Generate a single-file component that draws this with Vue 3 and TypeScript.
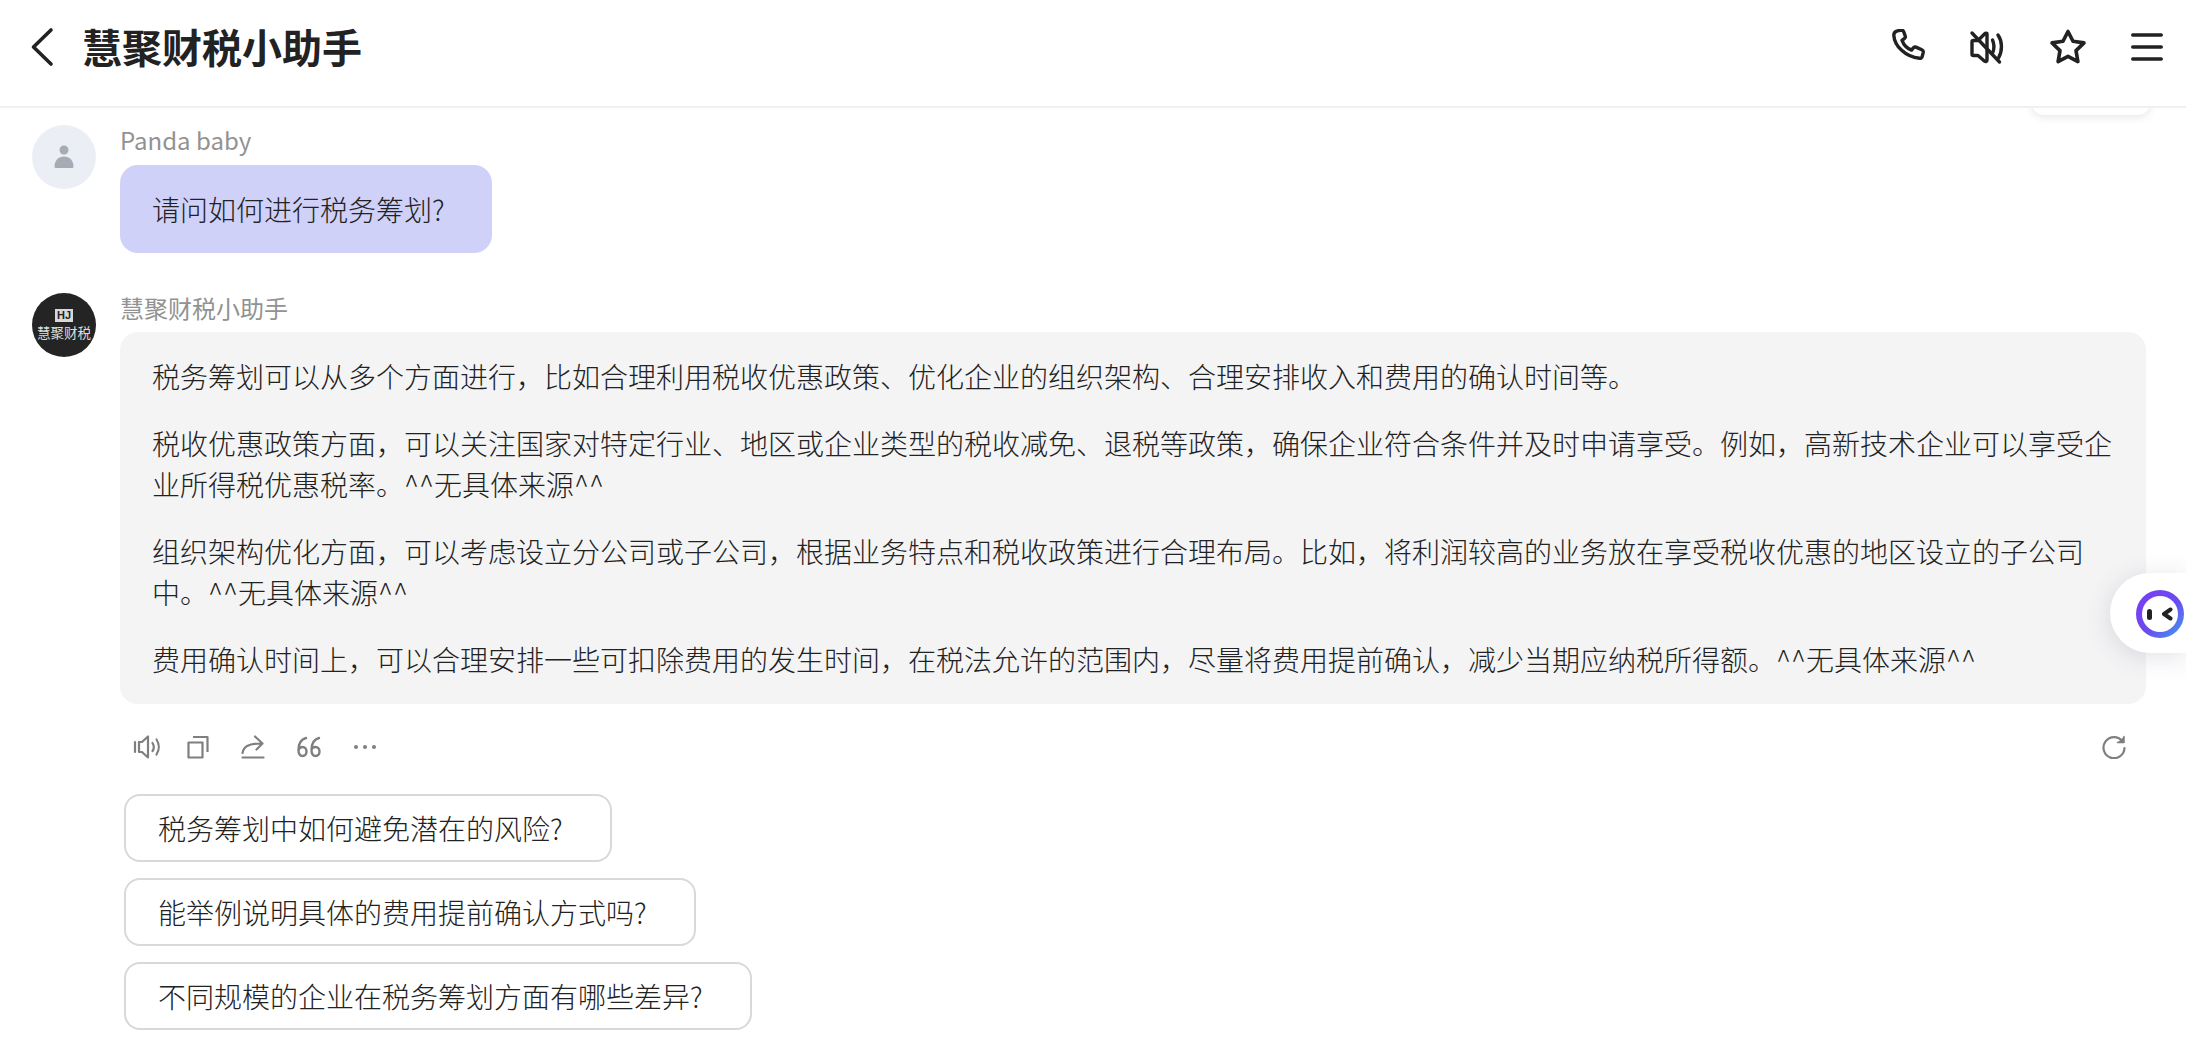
<script setup lang="ts">
const paragraphs: string[] = [
  '税务筹划可以从多个方面进行，比如合理利用税收优惠政策、优化企业的组织架构、合理安排收入和费用的确认时间等。',
  '税收优惠政策方面，可以关注国家对特定行业、地区或企业类型的税收减免、退税等政策，确保企业符合条件并及时申请享受。例如，高新技术企业可以享受企业所得税优惠税率。^^无具体来源^^',
  '组织架构优化方面，可以考虑设立分公司或子公司，根据业务特点和税收政策进行合理布局。比如，将利润较高的业务放在享受税收优惠的地区设立的子公司中。^^无具体来源^^',
  '费用确认时间上，可以合理安排一些可扣除费用的发生时间，在税法允许的范围内，尽量将费用提前确认，减少当期应纳税所得额。^^无具体来源^^',
]
const suggestions: string[] = [
  '税务筹划中如何避免潜在的风险?',
  '能举例说明具体的费用提前确认方式吗?',
  '不同规模的企业在税务筹划方面有哪些差异?',
]
</script>

<template>
  <div class="page">
    <header class="header">
      <div class="head-left">
        <svg class="back" width="24" height="40" viewBox="0 0 24 40" fill="none">
          <path d="M21 3 3.500 20 21 37" stroke="#222" stroke-width="3.600" stroke-linecap="round" stroke-linejoin="round" />
        </svg>
        <h1 class="title">慧聚财税小助手</h1>
      </div>
      <div class="head-right">
        <svg class="phone" width="36" height="36" viewBox="0 0 36 36" fill="none" stroke="#222" stroke-width="3.400" stroke-linejoin="round" stroke-linecap="round">
          <path d="M6.500 1.800 10.600 1c1.200 0 1.800 1 2.200 2l1.500 4.300c.3 1-.2 1.700-1 2.300L11 11.300c1.500 4 5 8 9.500 9.800l2-2.400c.8-.8 1.500-1 2.500-.6l5.800 2.700c1.200.6 1.700 1.500 1.400 2.800l-1 3.800c-.4 1.300-1.400 2-2.800 1.900C14.500 28 3.500 17 2.800 6.300 2.700 4 4.200 2.300 6.500 1.800Z" />
        </svg>
        <svg width="36" height="36" viewBox="0 0 36 36" fill="none" stroke="#222" stroke-width="3.400" stroke-linejoin="round" stroke-linecap="round">
          <path d="M18 5v26c0 1.600-1.300 2-2.400 1.200L9 26.500H4.500c-1 0-1.500-.6-1.500-1.500V13c0-1 .5-1.500 1.500-1.500H9L15.500 5c1.100-1.100 2.500-1.200 2.500 0Z" />
          <path d="M23.500 11c1.800 4 1.800 8 .5 12M29 6c4.500 6.500 4.500 16 .5 23" />
          <path d="M3 4 30.500 33" />
        </svg>
        <svg width="38" height="36" viewBox="0 0 38 36" fill="none" stroke="#222" stroke-width="3.600" stroke-linejoin="round">
          <path d="M19 2.500 24 12.300l11 1.600-8 7.700 1.900 11L19 27.300 9.100 32.600 11 21.600l-8-7.700 11-1.600Z" />
        </svg>
        <svg class="menu" width="32" height="28" viewBox="0 0 32 28" fill="none" stroke="#222" stroke-width="3.600" stroke-linecap="round">
          <path d="M1.800 2h28.400M1.800 14h28.400M1.800 26h28.400" />
        </svg>
      </div>
    </header>

    <div class="peek"></div>

    <main class="chat">
      <section class="msg">
        <div class="avatar user-avatar">
          <svg width="22" height="24" viewBox="0 0 22 24" fill="#a7abb5">
            <circle cx="11" cy="5" r="4.500" />
            <path d="M1.500 21.500C1.500 15.500 5.500 11.500 11 11.500s9.500 4 9.500 10c0 1-.6 1.500-1.500 1.500H3c-1 0-1.500-.5-1.500-1.500Z" />
          </svg>
        </div>
        <div class="body">
          <div class="name">Panda baby</div>
          <div class="bubble user-bubble">请问如何进行税务筹划?</div>
        </div>
      </section>

      <section class="msg second">
        <div class="avatar bot-avatar">
          <span class="logo-mark">HJ</span>
          <span class="logo-text">慧聚财税</span>
        </div>
        <div class="body">
          <div class="name">慧聚财税小助手</div>
          <div class="bubble bot-bubble">
            <p v-for="(p, i) in paragraphs" :key="i">{{ p }}</p>
          </div>
          <div class="actions">
            <div class="action-left">
              <svg class="speaker" width="28" height="26" viewBox="0 0 28 26" fill="none" stroke="#7f7f7f" stroke-width="2.200" stroke-linejoin="round" stroke-linecap="round">
                <path d="M2 8v10M6 8h3l6-5.500V23.500L9 18H6Z" />
                <path d="M19.500 9c1.500 2.500 1.500 6 0 8M23.500 5.500c3 4.500 3 10.500 0 15" />
              </svg>
              <svg width="22" height="24" viewBox="0 0 22 24" fill="none" stroke="#7f7f7f" stroke-width="2.200" stroke-linejoin="round">
                <path d="M1.500 7.500h14v15h-14Z" />
                <path d="M6 2h14.500v15" />
              </svg>
              <svg width="24" height="24" viewBox="0 0 24 24" fill="none" stroke="#7f7f7f" stroke-width="2.200" stroke-linejoin="round" stroke-linecap="round">
                <path d="M1.500 18c1-6 5-9.500 19-9.500M14 1.500l7.500 7-6 6" />
                <path d="M1.500 22.500h21" />
              </svg>
              <svg width="24" height="22" viewBox="0 0 24 22" fill="none" stroke="#7f7f7f" stroke-width="2.400" stroke-linecap="round">
                <path d="M9 2C3.500 3.500 1.500 7 1.500 14c0 3.500 1.500 6 4 6s4-2 4-4.500S8 11 5.500 11 2 12.500 1.500 14" />
                <path d="M22 2c-5.500 1.500-7.500 5-7.500 12 0 3.500 1.500 6 4 6s4-2 4-4.500-1.500-4.500-4-4.500-4 1.500-4 3" />
              </svg>
              <svg class="more" width="24" height="6" viewBox="0 0 24 6" fill="#7f7f7f">
                <circle cx="3" cy="3" r="2" /><circle cx="12" cy="3" r="2" /><circle cx="21" cy="3" r="2" />
              </svg>
            </div>
            <svg width="24" height="24" viewBox="0 0 24 24" fill="none" stroke="#7f7f7f" stroke-width="2.200" stroke-linecap="round">
              <path d="M20.500 6.500A10.500 10.500 0 1 0 22.500 13" />
              <path d="M22 1.500v6h-6.500" fill="#7f7f7f" stroke-width="1.500" stroke-linejoin="round" />
            </svg>
          </div>
          <div class="suggestions">
            <button v-for="s in suggestions" :key="s" class="suggestion">{{ s }}</button>
          </div>
        </div>
      </section>
    </main>

    <div class="float-tab">
      <div class="ring"><div class="face"><i class="eye"></i>
        <svg width="14" height="14" viewBox="0 0 14 14" fill="none" stroke="#222" stroke-width="4" stroke-linecap="round" stroke-linejoin="round"><path d="M10.500 2.500 4 7l6.500 4.500" /></svg>
      </div></div>
    </div>
  </div>
</template>

<style scoped>
.page {
  position: relative;
  width: 2186px;
  height: 1064px;
  overflow: hidden;
  background: #fff;
  font-family: "Noto Sans CJK SC", "Noto Sans", sans-serif;
  font-weight: 300;
  color: #222;
}
.header {
  position: relative;
  z-index: 2;
  box-sizing: border-box;
  display: flex;
  align-items: center;
  justify-content: space-between;
  height: 108px;
  padding: 0 23px 12px 30px;
  background: #fff;
  border-bottom: 2px solid #eef0f5;
}
.head-left {
  display: flex;
  align-items: center;
  gap: 28px;
}
.back { display: block; }
.title {
  margin: 0;
  font-size: 40px;
  font-weight: 700;
  line-height: 54px;
  padding-bottom: 2px;
  color: #222;
}
.head-right {
  display: flex;
  align-items: center;
  gap: 44px;
}
.head-right svg { display: block; }
.phone { margin-right: -2px; }
.peek {
  position: absolute;
  z-index: 1;
  left: 2032px;
  top: 92px;
  width: 118px;
  height: 23px;
  border-radius: 0 0 12px 12px;
  background: #fff;
  box-shadow: 0 2px 8px rgba(40, 50, 80, 0.12);
}
.chat {
  padding: 17px 40px 0 32px;
}
.msg {
  display: flex;
  gap: 24px;
}
.msg.second { margin-top: 40px; }
.avatar {
  flex: none;
  width: 64px;
  height: 64px;
  border-radius: 50%;
  display: flex;
  flex-direction: column;
  align-items: center;
  justify-content: center;
}
.user-avatar { background: #ebeef4; }
.bot-avatar {
  background: #242424;
  color: #ddd;
}
.logo-mark {
  font-family: "Liberation Sans", sans-serif;
  font-size: 11px;
  line-height: 13px;
  font-weight: 700;
  padding: 0 2px;
  color: #222;
  background: #d8d8d8;
}
.logo-text {
  font-size: 13.500px;
  font-weight: 400;
  line-height: 17px;
  margin-top: 2px;
  white-space: nowrap;
}
.body {
  flex: 1;
  min-width: 0;
}
.name {
  font-size: 24px;
  font-weight: 400;
  line-height: 30px;
  height: 40px;
  color: #929292;
}
.second .name { height: 39px; line-height: 30px; }
.bubble {
  font-size: 28px;
  line-height: 41px;
  border-radius: 18px;
}
.user-bubble {
  display: inline-block;
  padding: 24px 47px 23px 32px;
  background: #d0d1f9;
}
.bot-bubble {
  padding: 24px 24px 24px 32px;
  background: #f4f4f5;
}
.bot-bubble p {
  margin: 0 0 26px;
}
.bot-bubble p:last-child { margin-bottom: 0; }
.actions {
  display: flex;
  align-items: center;
  justify-content: space-between;
  height: 28px;
  margin-top: 29px;
  padding: 0 20px 0 13px;
}
.actions svg { display: block; }
.action-left {
  display: flex;
  align-items: center;
  gap: 32px;
}
.speaker { margin-right: -6px; }
.suggestions {
  display: flex;
  flex-direction: column;
  align-items: flex-start;
  gap: 16px;
  margin-top: 33px;
  padding-left: 4px;
}
.suggestion {
  height: 68px;
  padding: 0 47px 0 32px;
  font: inherit;
  font-size: 28px;
  color: #222;
  background: #fff;
  border: 2px solid #d9d9d9;
  border-radius: 16px;
}
.float-tab {
  position: absolute;
  z-index: 3;
  right: 0;
  top: 573px;
  width: 76px;
  height: 80px;
  border-radius: 40px 0 0 40px;
  background: #fff;
  box-shadow: 0 4px 26px rgba(60, 70, 100, 0.16);
  padding: 17px 0 0 26px;
  box-sizing: border-box;
}
.ring {
  width: 48px;
  height: 48px;
  border-radius: 50%;
  padding: 6px;
  box-sizing: border-box;
  background: linear-gradient(135deg, #7a3cf0 0%, #6a4cf0 55%, #3fa0ee 100%);
}
.face {
  width: 36px;
  height: 36px;
  border-radius: 50%;
  background: #fff;
  display: flex;
  align-items: center;
  justify-content: center;
  gap: 8px;
}
.eye {
  display: block;
  width: 5px;
  height: 11px;
  border-radius: 3px;
  background: #222;
}
</style>

<style>
html, body { margin: 0; background: #fff; }
</style>
